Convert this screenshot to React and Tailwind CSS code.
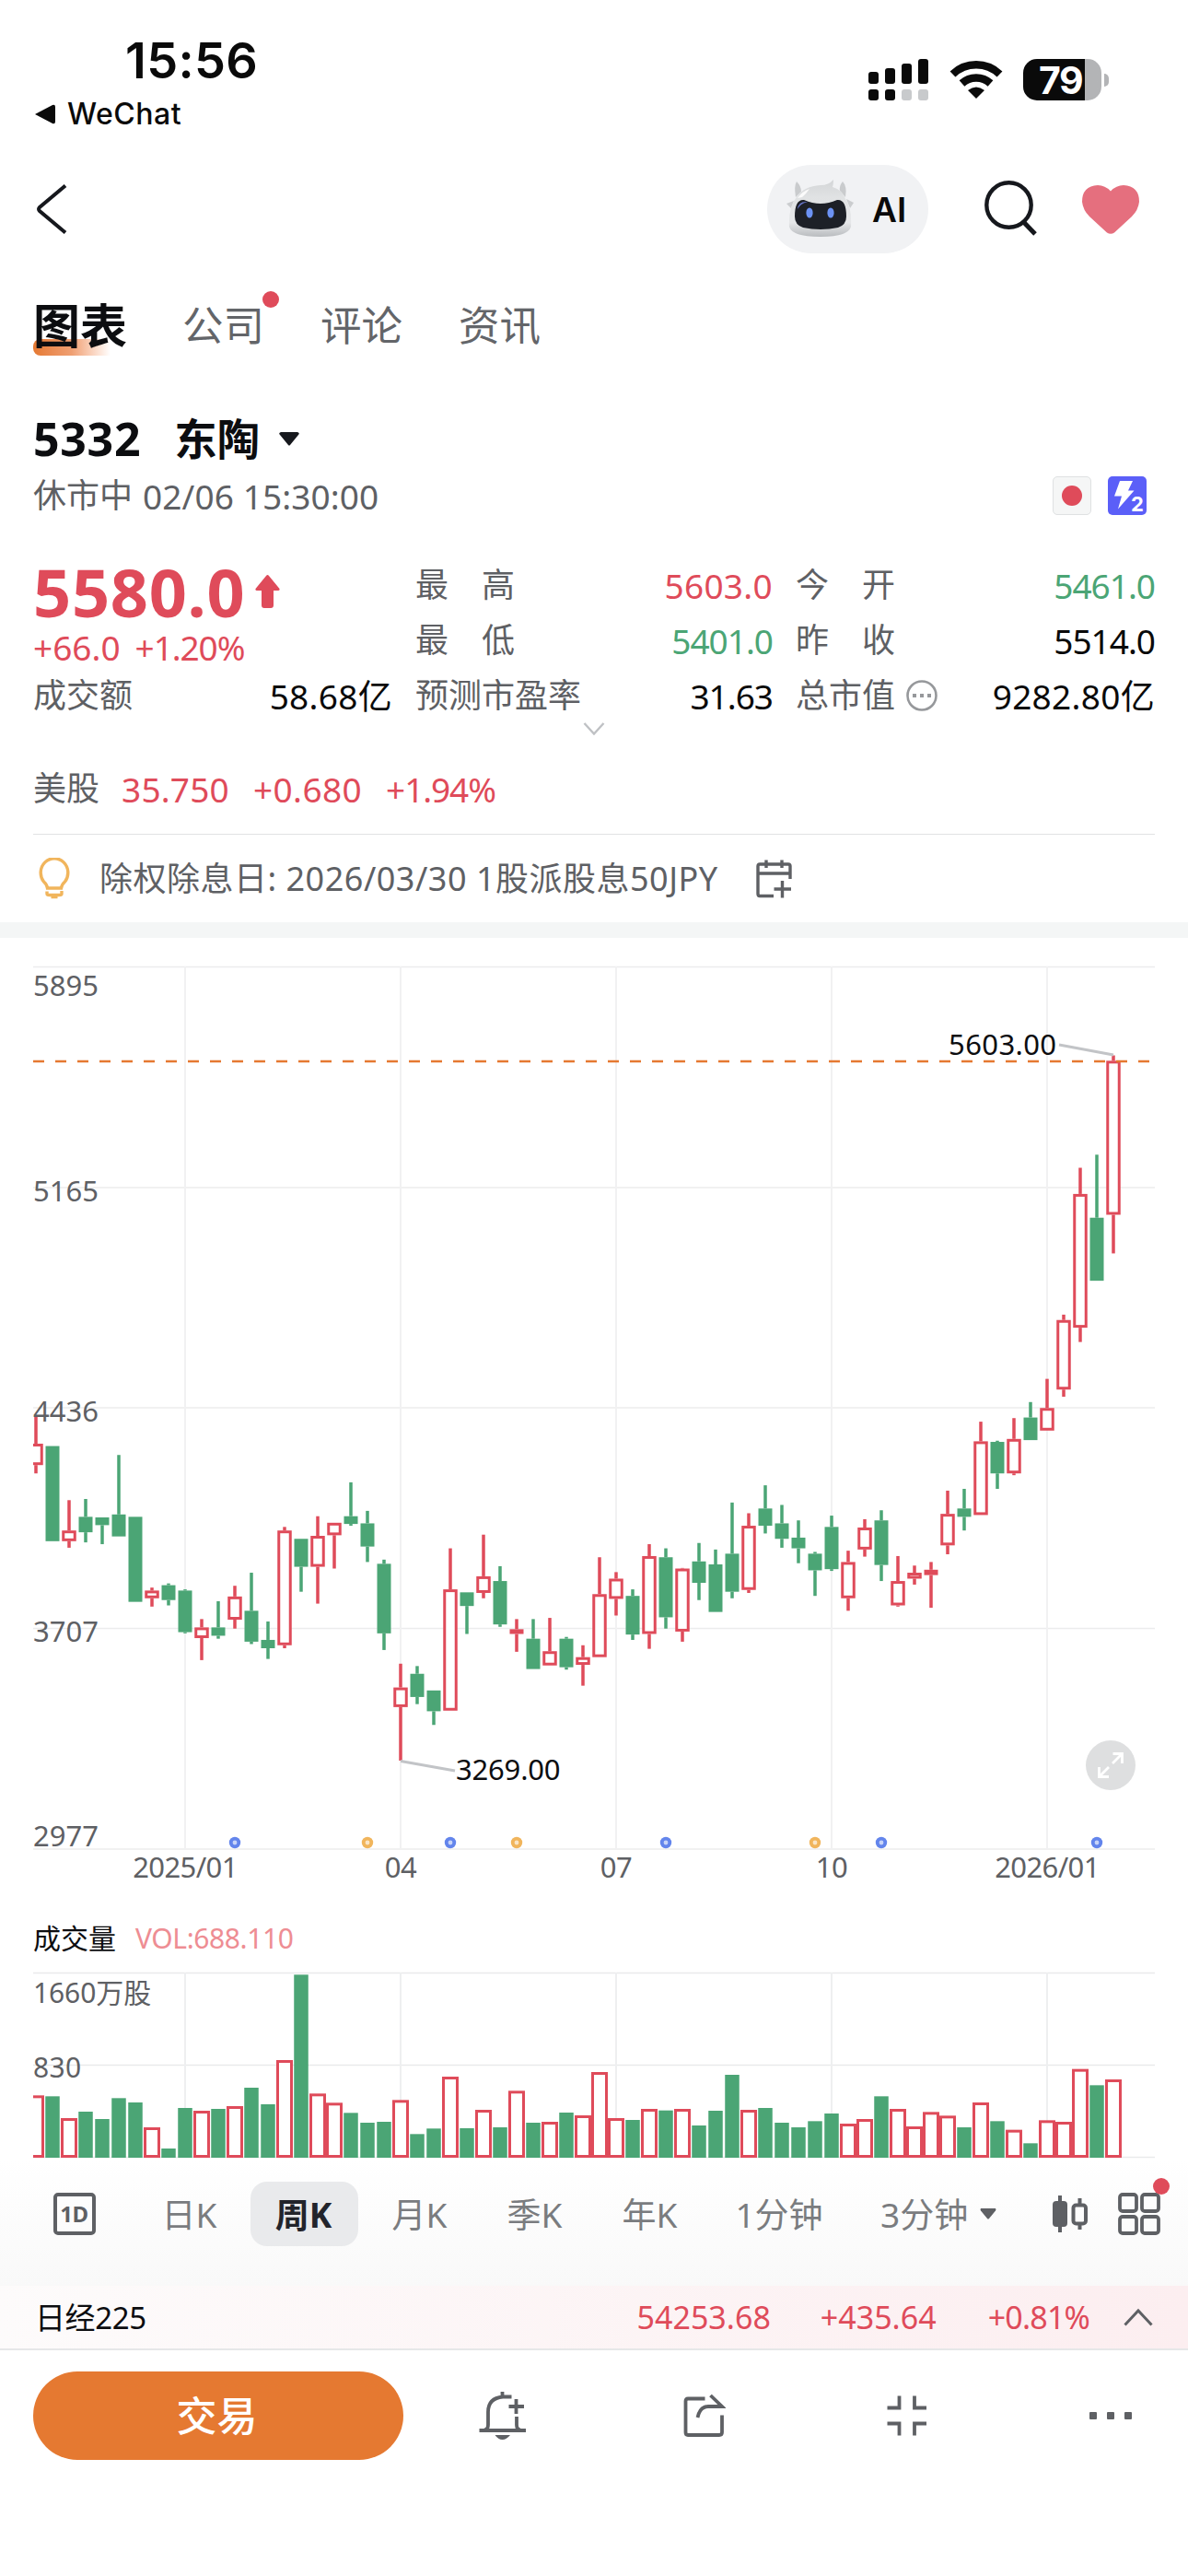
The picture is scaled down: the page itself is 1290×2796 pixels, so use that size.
import { clsx } from 'clsx';

const RED = '#df4b5a';
const GREEN = '#4ba575';
const ORANGE = '#e57931';

// [rising, high, body top, body bottom, low, volume]
const CANDLES = [
  [1, 785, 832, 868, 882, 203], [0, 836, 836, 996, 996, 200], [1, 927, 978, 996, 1007, 129],
  [0, 925, 955, 981, 998, 150], [0, 956, 956, 969, 1001, 126], [0, 851, 951, 988, 988, 194],
  [0, 955, 955, 1098, 1098, 180], [1, 1074, 1079, 1092, 1106, 99], [0, 1067, 1070, 1095, 1104, 30],
  [0, 1077, 1079, 1149, 1151, 162], [1, 1127, 1141, 1159, 1196, 153], [0, 1097, 1141, 1155, 1160, 159],
  [1, 1071, 1089, 1128, 1143, 168], [0, 1049, 1113, 1165, 1169, 228], [0, 1131, 1162, 1176, 1194, 174],
  [1, 972, 978, 1171, 1176, 318], [0, 992, 992, 1039, 1081, 596], [1, 954, 987, 1039, 1101, 209],
  [1, 965, 965, 986, 1042, 179], [0, 897, 954, 967, 970, 146], [0, 945, 966, 1005, 1031, 114],
  [0, 1027, 1034, 1151, 1179, 117], [1, 1202, 1242, 1275, 1365, 188], [0, 1206, 1219, 1258, 1270, 77],
  [0, 1247, 1247, 1282, 1305, 95], [1, 1008, 1077, 1281, 1281, 264], [0, 1082, 1082, 1105, 1152, 96],
  [1, 985, 1055, 1083, 1092, 156], [0, 1038, 1063, 1136, 1140, 99], [1, 1127, 1144, 1152, 1182, 218],
  [0, 1127, 1160, 1211, 1211, 114], [1, 1125, 1181, 1205, 1205, 117], [0, 1157, 1160, 1208, 1212, 147],
  [1, 1171, 1191, 1204, 1239, 138], [1, 1023, 1085, 1191, 1191, 279], [1, 1048, 1059, 1093, 1121, 129],
  [0, 1077, 1088, 1153, 1162, 123], [1, 1001, 1021, 1152, 1177, 159], [0, 1008, 1023, 1124, 1143, 154],
  [1, 1041, 1042, 1148, 1165, 159], [0, 999, 1030, 1066, 1095, 105], [0, 1010, 1035, 1115, 1115, 153],
  [0, 931, 1017, 1081, 1092, 270], [1, 949, 970, 1078, 1083, 156], [0, 902, 941, 970, 983, 162],
  [0, 935, 966, 992, 1007, 114], [0, 961, 990, 1008, 1033, 99], [0, 1014, 1017, 1045, 1088, 119],
  [0, 953, 972, 1043, 1046, 144], [1, 1012, 1031, 1092, 1113, 111], [1, 959, 973, 1010, 1022, 126],
  [0, 944, 961, 1036, 1063, 200], [1, 1021, 1063, 1104, 1106, 159], [1, 1037, 1049, 1059, 1069, 102],
  [1, 1031, 1044, 1053, 1108, 149], [1, 911, 950, 1003, 1018, 137], [0, 908, 941, 955, 978, 99],
  [1, 795, 828, 952, 952, 180], [0, 827, 829, 882, 908, 119], [1, 789, 824, 882, 885, 91],
  [0, 762, 788, 826, 826, 47], [1, 723, 772, 810, 810, 122], [1, 615, 624, 741, 753, 117],
  [1, 368, 412, 637, 661, 289], [0, 346, 452, 558, 558, 236], [1, 179, 188, 447, 512, 255],
];

const MONTHS = [
  { x: 201, label: '2025/01' },
  { x: 435, label: '04' },
  { x: 669, label: '07' },
  { x: 903, label: '10' },
  { x: 1137, label: '2026/01' },
];

const PRICE_LINES = [
  { y: 19.5, labelY: 51, label: '5895' },
  { y: 259, labelY: 274, label: '5165' },
  { y: 498, labelY: 513, label: '4436' },
  { y: 737.5, labelY: 752, label: '3707' },
  { y: 977, labelY: 974, label: '2977' },
];

const EVENTS = [
  { x: 255, color: '#6385ec' },
  { x: 399, color: '#f1b55c' },
  { x: 489, color: '#6385ec' },
  { x: 561, color: '#f1b55c' },
  { x: 723, color: '#6385ec' },
  { x: 885, color: '#f1b55c' },
  { x: 957, color: '#6385ec' },
  { x: 1191, color: '#6385ec' },
];

const candleX = (i) => 39 + i * 18;
const levelY = (v) => v * 0.6454;

const StatusBar = () => (
  <div className="h-[150px] flex justify-between pl-[37px] pr-[86px]">
    <div className="pt-[33px] font-['Inter'] text-[#0a0a0a]">
      <div className="h-[66px] pl-[99px] text-[54px] leading-[66px] font-semibold tracking-[0.3px]">15:56</div>
      <div className="h-[50px] flex items-center">
        <svg width="24" height="22" viewBox="0 0 24 22">
          <path d="M1 11 L20 1 Q23 0 23 3 V19 Q23 22 20 21 Z" fill="#0a0a0a" />
        </svg>
        <span className="ml-[12px] text-[32px] font-medium tracking-[0.5px]">WeChat</span>
      </div>
    </div>
    <div className="pt-[64px] flex items-start">
      <svg width="66" height="46" viewBox="0 0 66 46" fill="#0a0a0a">
        <rect x="0" y="14" width="11" height="13" rx="3" />
        <rect x="18" y="10" width="11" height="17" rx="3" />
        <rect x="36" y="5" width="11" height="22" rx="3" />
        <rect x="54" y="0" width="11" height="27" rx="3" />
        <rect x="0" y="33" width="11" height="12" rx="3" />
        <rect x="18" y="33" width="11" height="12" rx="3" />
        <rect x="36" y="33" width="11" height="12" rx="3" fill="#c8cacc" />
        <rect x="54" y="33" width="11" height="12" rx="3" fill="#c8cacc" />
      </svg>
      <svg className="ml-[22px]" width="58" height="44" viewBox="0 0 58 44" fill="none" stroke="#0a0a0a">
        <path d="M3.5 16.5 A37 37 0 0 1 54.5 16.5" strokeWidth="8.5" />
        <path d="M13.5 26.5 A23 23 0 0 1 44.5 26.5" strokeWidth="8.5" />
        <path d="M29 43 L20 34 Q29 27 38 34 Z" fill="#0a0a0a" stroke="none" />
      </svg>
      <div className="ml-[22px] flex items-center">
        <div className="w-[85px] h-[45px] rounded-[15px] bg-gradient-to-r from-[#0a0a0a] from-[79%] to-[#b3b4b6] to-[79%] pl-[17px] text-white font-['Inter'] font-bold text-[41px] leading-[46px] tracking-[-1.5px]">
          79
        </div>
        <div className="ml-[3px] w-[5px] h-[14px] rounded-r-full bg-[#b3b4b6]" />
      </div>
    </div>
  </div>
);

const Robot = () => (
  <svg width="76" height="66" viewBox="0 0 76 66">
    <defs>
      <linearGradient id="shell" x1="0" y1="0" x2="0" y2="1">
        <stop offset="0" stopColor="#d3d5d7" />
        <stop offset="0.3" stopColor="#e0e2e3" />
        <stop offset="0.75" stopColor="#e6e7e9" />
        <stop offset="1" stopColor="#b9bcbf" />
      </linearGradient>
    </defs>
    <path d="M11 20 Q9 8 12 3 Q17 8 17 14 Z" fill="#c9cbcd" />
    <path d="M65 20 Q67 8 62 3 Q58 8 59 13 Z" fill="#c9cbcd" />
    <path d="M1 27 L9 24 L6 32 Z M74 26 L66 22 L70 32 Z" fill="#cbcdcf" />
    <path d="M12 20 Q20 8 38 7 Q47 7 52 1 Q52 6 51 9 Q62 12 65 22 Q72 30 71 52 Q68 63 38 63 Q7 63 4 52 Q3 30 12 20 Z" fill="url(#shell)" />
    <path d="M13 21 Q19 13 26 11 Q22 17 18 20 Z" fill="#fbfbfb" />
    <path d="M20 23 Q38 31 56 23 Q66 22 66 41 Q66 50 57 53 Q38 57 19 53 Q10 50 10 41 Q10 22 20 23 Z" fill="#1d2027" />
    <path d="M13 33 Q14 24 24 25 Q16 27 13 33 Z" fill="#6674c8" />
    <ellipse cx="26" cy="37" rx="3.6" ry="5.6" fill="#6c92f4" />
    <ellipse cx="49" cy="37" rx="3.6" ry="5.6" fill="#6c92f4" />
  </svg>
);

const NavBar = () => (
  <div className="h-[154px] flex items-center pl-[39px] pr-[52px]">
    <svg width="34" height="54" viewBox="0 0 34 54" fill="none" stroke="#16181d" strokeWidth="4">
      <path d="M32 1.5 L4 25 Q2 27 4 29 L32 52.5" />
    </svg>
    <div className="ml-auto w-[175px] h-[96px] rounded-full bg-[#f1f2f4] flex items-center pl-[20px]">
      <Robot />
      <span className="ml-[18px] font-['Inter'] text-[37px] font-semibold text-[#0a0a0a]">AI</span>
    </div>
    <svg className="ml-[60px]" width="60" height="62" viewBox="0 0 60 62" fill="none" stroke="#16181d" strokeWidth="4.4">
      <circle cx="27.5" cy="26.5" r="24.2" />
      <path d="M43.5 45 L56 58" strokeWidth="5" />
    </svg>
    <svg className="ml-[47px] mr-[1px]" width="62" height="53" viewBox="0 0 62 53">
      <path d="M31 6.5 Q25 0 17 0 Q0 1 0 18 Q1 27 8 34 L27 51.5 Q31 54 35 51.5 L54 34 Q61 27 62 18 Q62 1 45 0 Q37 0 31 6.5 Z" fill="#e56f7e" />
    </svg>
  </div>
);

const TABS = ['公司', '评论', '资讯'];

const Tabs = () => (
  <div className="h-[98px] flex items-center pl-[36px] text-[44.5px] text-[#636569]">
    <div className="relative text-[51px] font-bold text-[#0c0d10] leading-none mr-[60px]">
      <div className="absolute left-0 -bottom-[7px] w-[84px] h-[18px] rounded-l-lg bg-gradient-to-r from-[#e57931] via-[#ef9f72] to-white" />
      <span className="relative">图表</span>
    </div>
    {TABS.map((tab, i) => (
      <div key={tab} className="relative mr-[61px] leading-none">
        {tab}
        {i === 0 && <span className="absolute -right-[16px] -top-[15px] w-[18px] h-[18px] rounded-full bg-[#df4b5a]" />}
      </div>
    ))}
  </div>
);

const Stat = ({ label, value, color = 'text-[#0a0a0a]', tight, more }) => (
  <div className="h-[60px] flex items-center justify-between">
    <div className="flex items-center text-[36px] text-[#5e6064]">
      <div className={clsx('flex justify-between', label.length === 2 && 'w-[108px]')}>
        {label.split('').map((c, i) => (
          <span key={i}>{c}</span>
        ))}
      </div>
      {more && (
        <svg className="ml-[11px]" width="36" height="36" viewBox="0 0 36 36" fill="none" stroke="#96989b" strokeWidth="2.6">
          <circle cx="18" cy="18" r="15.5" />
          <path d="M8 18 H12 M16 18 H20 M24 18 H28" strokeWidth="4" />
        </svg>
      )}
    </div>
    <span className={clsx('text-[37px]', color, tight ? 'tracking-[-1px]' : 'tracking-[0.3px]')}>{value}</span>
  </div>
);

const Quote = () => (
  <div className="px-[36px]">
    <div className="mt-[44px] h-[60px] flex items-center text-[#0c0d10] font-bold">
      <span className="text-[50px] tracking-[0.7px]">5332</span>
      <span className="ml-[36px] text-[46.5px]">东陶</span>
      <svg className="ml-[21px]" width="22" height="15" viewBox="0 0 22 15">
        <path d="M2 0 H20 Q23 1 21 3 L12 14 Q11 15 10 14 L1 3 Q-1 1 2 0 Z" fill="#16181d" />
      </svg>
    </div>
    <div className="mt-[2px] h-[60px] flex items-center text-[37px] text-[#5e6064]">
      <span className="text-[36px]">休市中</span>
      <span className="ml-[11px] tracking-[0.1px]">02/06 15:30:00</span>
      <div className="ml-auto mr-[9px] flex gap-[18px]">
        <div className="w-[42px] h-[42px] rounded-[5px] border border-[#dfe1e2] bg-[#f5f6f6] flex items-center justify-center">
          <div className="w-[22px] h-[22px] rounded-full bg-[#df4b5a]" />
        </div>
        <svg width="42" height="42" viewBox="0 0 42 42">
          <rect width="42" height="42" rx="5" fill="#5b5ff8" />
          <path d="M13 5 H27 L22 15.5 H28.5 L11 35.5 L15 21.5 H7 Z" fill="#fff" />
          <text x="25" y="37.5" fontSize="22" fontWeight="700" fill="#fff" fontFamily="Inter">2</text>
        </svg>
      </div>
    </div>

    <div className="mt-[37px] flex gap-[25px]">
      <div className="w-[390px]">
        <div className="h-[74px] flex items-center text-[#df4b5a]">
          <span className="text-[72px] leading-none font-bold tracking-[0.7px]">5580.0</span>
          <svg className="ml-[11px]" width="27" height="36" viewBox="0 0 27 36" fill={RED}>
            <path d="M12 1 Q13.5 -1 15 1 L26.5 15 Q27 17 25 17 H20 V33 Q20 36 17 36 H10 Q7 36 7 33 V17 H2 Q0 17 .5 15 Z" />
          </svg>
        </div>
        <div className="h-[46px] flex items-center text-[37px] text-[#df4b5a] gap-[16px]">
          <span>+66.0</span>
          <span className="tracking-[-1.1px]">+1.20%</span>
        </div>
        <Stat label="成交额" value="58.68亿" />
      </div>
      <div className="w-[388px]">
        <Stat label="最高" value="5603.0" color="text-[#df4b5a]" />
        <Stat label="最低" value="5401.0" color="text-[#4ba575]" tight />
        <Stat label="预测市盈率" value="31.63" tight />
      </div>
      <div className="w-[390px]">
        <Stat label="今开" value="5461.0" color="text-[#4ba575]" tight />
        <Stat label="昨收" value="5514.0" tight />
        <Stat label="总市值" value="9282.80亿" more />
      </div>
    </div>
    <div className="-mt-[1px] flex justify-center">
      <svg width="24" height="14" viewBox="0 0 24 14" fill="none" stroke="#bfc1c4" strokeWidth="2.4">
        <path d="M1.5 1 L12 12.5 L22.5 1" />
      </svg>
    </div>

    <div className="mt-[34px] h-[48px] flex items-center text-[37px] text-[#df4b5a]">
      <span className="text-[36px] text-[#5e6064]">美股</span>
      <span className="ml-[24px] tracking-[0.2px]">35.750</span>
      <span className="ml-[26px] tracking-[0.4px]">+0.680</span>
      <span className="ml-[26px] tracking-[-1.1px]">+1.94%</span>
    </div>
    <div className="mt-[25px] h-[96px] border-t border-[#e1e2e4] flex items-center text-[36px] text-[#5e6064]">
      <svg className="ml-[6px]" width="34" height="46" viewBox="0 0 34 46" fill="none" stroke="#f1b55c" strokeWidth="3.4">
        <path d="M9.5 33 Q9 29 5.500 26 A14.800 15.500 0 1 1 28.500 26 Q25 29 24.500 33 Z" />
        <path d="M9 36.500 V39 Q9 40.500 12 40.500 H22 Q25 40.500 25 39 V36 M13.500 42.500 H20.500" />
      </svg>
      <span className="ml-[32px] tracking-[0.5px]">除权除息日: 2026/03/30 1股派股息50JPY</span>
      <svg className="ml-[41px]" width="40" height="42" viewBox="0 0 40 42" fill="none" stroke="#5e6064" strokeWidth="3.4">
        <path d="M37 21 V7 Q37 5 35 5 H4 Q2 5 2 7 V37 Q2 39.500 4 39.500 H19" />
        <path d="M2 15 H37 M11 0.500 V9 M28 0.500 V9 M28.500 23 V41.500 M19.500 32 H38" />
      </svg>
    </div>
  </div>
);

const PriceChart = () => (
  <svg className="mt-[12px] block shrink-0" width="1290" height="1020" viewBox="0 0 1290 1020" fontSize="31" fill="#5e6064">
    <defs>
      <clipPath id="plot">
        <rect x="36" y="0" width="1218" height="1020" />
      </clipPath>
    </defs>
    {PRICE_LINES.map((l) => (
      <line key={l.label} x1="36" x2="1254" y1={l.y} y2={l.y} stroke="#ececed" strokeWidth="1.5" />
    ))}
    {MONTHS.map((m) => (
      <g key={m.label}>
        <line x1={m.x} x2={m.x} y1="19" y2="977" stroke="#f1f1f2" strokeWidth="2" />
        <text x={m.x} y="1008" textAnchor="middle" letterSpacing="-0.6">{m.label}</text>
      </g>
    ))}
    <g clipPath="url(#plot)">
      {CANDLES.map(([up, high, top, bottom, low], i) => {
        const x = candleX(i);
        const color = up ? RED : GREEN;
        const y = levelY(top);
        const h = levelY(bottom) - y;
        return (
          <g key={i} fill={color}>
            <rect x={x - 1.75} y={levelY(high)} width="3.5" height={levelY(top) - levelY(high)} />
            <rect x={x - 1.75} y={levelY(bottom)} width="3.5" height={levelY(low) - levelY(bottom)} />
            {up && h > 6 ? (
              <rect x={x - 6.25} y={y + 1.5} width="12.5" height={h - 3} fill="#fff" stroke={color} strokeWidth="3" />
            ) : (
              <rect x={x - 7.5} y={y} width="15" height={h} />
            )}
          </g>
        );
      })}
    </g>
    <line x1="36" x2="1254" y1="122" y2="122" stroke={ORANGE} strokeWidth="2.6" strokeDasharray="12 12" />
    {PRICE_LINES.map((l) => (
      <text key={l.label} x="36" y={l.labelY}>{l.label}</text>
    ))}
    <g stroke="#c2c4c7" strokeWidth="2.8">
      <line x1="1150" y1="104" x2="1209" y2="115" />
      <line x1="435" y1="881.500" x2="494" y2="892" />
    </g>
    <g fill="#0c0d10">
      <text x="1030" y="115" letterSpacing="0.4">5603.00</text>
      <text x="495" y="902" letterSpacing="-0.2">3269.00</text>
    </g>
    {EVENTS.map((e) => (
      <g key={e.x}>
        <circle cx={e.x} cy="970" r="6.200" fill={e.color} />
        <circle cx={e.x} cy="970" r="2.400" fill="#fff" opacity="0.65" />
      </g>
    ))}
    <circle cx="1206" cy="886" r="27" fill="#dedfe0" />
    <path d="M1208 884 L1219 873 M1208.500 873.500 H1218.500 V884 M1204 888 L1193 899 M1193.500 888 V898.500 H1204" stroke="#fff" strokeWidth="2.800" fill="none" />
  </svg>
);

const VolumeChart = () => (
  <>
    <div className="mt-[32px] h-[44px] shrink-0 flex items-center pl-[36px] text-[30px]">
      <span className="text-[#0c0d10]">成交量</span>
      <span className="ml-[21px] text-[#ee8d93] tracking-[-0.4px]">VOL:688.110</span>
    </div>
    <svg className="block shrink-0" width="1290" height="217" viewBox="0 0 1290 217" fontSize="30" fill="#5e6064">
      {[15.5, 115.5, 215.5].map((y) => (
        <line key={y} x1="36" x2="1254" y1={y} y2={y} stroke="#e9eaeb" strokeWidth="1.500" />
      ))}
      {MONTHS.map((m) => (
        <line key={m.label} x1={m.x} x2={m.x} y1="15" y2="216" stroke="#eeeff0" strokeWidth="2" />
      ))}
      <g clipPath="url(#plot)">
        {CANDLES.map(([up, , , , , vol], i) => {
          const x = candleX(i);
          const h = vol / 3;
          return up ? (
            <rect key={i} x={x - 7.5} y={217.5 - h} width="15" height={h - 3} fill="#fff" stroke={RED} strokeWidth="3" />
          ) : (
            <rect key={i} x={x - 7.75} y={216 - h} width="15.500" height={h} fill={GREEN} />
          );
        })}
      </g>
      <text x="36" y="48" letterSpacing="-0.1">1660万股</text>
      <text x="36" y="129" letterSpacing="0.4">830</text>
    </svg>
  </>
);

const PERIODS = ['日K', '周K', '月K', '季K', '年K'];

const PeriodBar = () => (
  <div className="h-[138px] shrink-0 pb-[18px] flex items-center pl-[18px] text-[37px] text-[#7a7c7f] bg-gradient-to-b from-white to-[#f9f9f9]">
    <div className="w-[125px] flex justify-center">
      <div className="w-[46px] h-[46px] rounded-[5px] border-4 border-[#5e6064] text-[#5e6064] text-[24px] leading-[38px] text-center font-bold tracking-[-0.5px]">1D</div>
    </div>
    {PERIODS.map((p) => (
      <div key={p} className="w-[125px] flex justify-center">
        <div className={clsx('w-[117px] h-[70px] flex items-center justify-center rounded-[18px]', p === '周K' && 'bg-[#e9eaec] text-[#22242b] font-bold pr-[2px]')}>
          {p}
        </div>
      </div>
    ))}
    <div className="w-[156px] text-center">1分钟</div>
    <div className="ml-[32px] w-[128px] flex items-center">
      3分钟
      <svg className="ml-[13px] shrink-0" width="18" height="12" viewBox="0 0 18 12">
        <path d="M1 0 H17 Q18 1 17 2.500 L10 11 Q9 12 8 11 L1 2.500 Q0 1 1 0 Z" fill="#5e6064" />
      </svg>
    </div>
    <svg className="ml-[59px]" width="38" height="42" viewBox="0 0 38 42" fill="#5e6064">
      <rect x="0" y="7" width="16" height="28" rx="4" />
      <rect x="6" y="1" width="4" height="40" />
      <rect x="22.500" y="11.500" width="13.500" height="20" rx="3" fill="none" stroke="#5e6064" strokeWidth="4" />
      <rect x="27.500" y="4" width="4" height="7" />
      <rect x="27.500" y="32" width="4" height="6" />
    </svg>
    <div className="relative ml-[33px]">
      <svg width="46" height="46" viewBox="0 0 46 46" fill="none" stroke="#5e6064" strokeWidth="3.800">
        <rect x="2" y="2" width="18" height="18" rx="3" />
        <rect x="26" y="2" width="18" height="18" rx="3" />
        <rect x="2" y="26" width="18" height="18" rx="3" />
        <rect x="26" y="26" width="18" height="18" rx="3" />
      </svg>
      <span className="absolute -right-[10px] -top-[16px] w-[18px] h-[18px] rounded-full bg-[#df4b5a]" />
    </div>
  </div>
);

const IndexBar = () => (
  <div className="h-[70px] shrink-0 flex items-center pl-[38px] pr-[38px] text-[34px] text-[#df4b5a] border-b-2 border-[#e6e7e8] bg-gradient-to-r from-[#fdfbfb] to-[#fceef0]">
    <span className="text-[33px] text-[#0c0d10] tracking-[-0.4px]">日经225</span>
    <span className="ml-auto">54253.68</span>
    <span className="ml-[54px]">+435.64</span>
    <span className="ml-[56px] tracking-[-0.8px]">+0.81%</span>
    <svg className="ml-[37px]" width="32" height="20" viewBox="0 0 32 20" fill="none" stroke="#5e6064" strokeWidth="3">
      <path d="M1.500 18.500 L16 3 L30.500 18.500" />
    </svg>
  </div>
);

const ActionBar = () => (
  <div className="h-[142px] shrink-0 flex items-center pl-[36px]">
    <button className="w-[402px] h-[96px] pr-[3px] rounded-full bg-[#e57931] text-white text-[44px] font-medium">交易</button>
    <svg className="ml-[82px]" width="52" height="54" viewBox="0 0 52 54" fill="none" stroke="#5e6064" strokeWidth="3.800">
      <path d="M25.500 1 V6 M35.500 6.500 H26 Q10 8 10 23 V37 Q10 42 6 42.500" />
      <path d="M0.500 43 H51 M41 28 V37 Q41 42 45 42.500 M40.500 9 V25 M32.500 17 H49" />
      <path d="M17.500 48 H34 Q30 53 25.500 53 Q21 53 17.500 48 Z" fill="#5e6064" stroke="none" />
    </svg>
    <svg className="ml-[170px]" width="46" height="48" viewBox="0 0 46 48" fill="none" stroke="#5e6064" strokeWidth="3.800">
      <path d="M23.500 5.500 H5 Q2.500 5.500 2.500 8 V42 Q2.500 45 5 45 H39 Q42 45 42 42 V23.500" />
      <path d="M29.500 2 L42 14 H27 Q18 14 15.500 26" />
    </svg>
    <svg className="ml-[175px]" width="44" height="44" viewBox="0 0 44 44" fill="none" stroke="#5e6064" strokeWidth="3.800">
      <path d="M13.500 0.500 V13.500 H0.500 M30 0.500 V13.500 H43 M13.500 43.500 V30.500 H0.500 M30 43.500 V30.500 H43" />
    </svg>
    <svg className="ml-[176px]" width="48" height="8" viewBox="0 0 48 8" fill="#5e6064">
      <rect x="0" width="8" height="8" rx="1" />
      <rect x="19" width="8" height="8" rx="1" />
      <rect x="38" width="8" height="8" rx="1" />
    </svg>
  </div>
);

const App = () => {
  return (
    <div className="w-[1290px] h-[2796px] overflow-hidden flex flex-col bg-white font-['Noto_Sans','Noto_Sans_CJK_SC',sans-serif] leading-none whitespace-nowrap">
      <StatusBar />
      <NavBar />
      <Tabs />
      <Quote />
      <div className="h-[17px] shrink-0 bg-[#f4f6f6]" />
      <PriceChart />
      <VolumeChart />
      <PeriodBar />
      <IndexBar />
      <ActionBar />
    </div>
  );
};

export default App;
